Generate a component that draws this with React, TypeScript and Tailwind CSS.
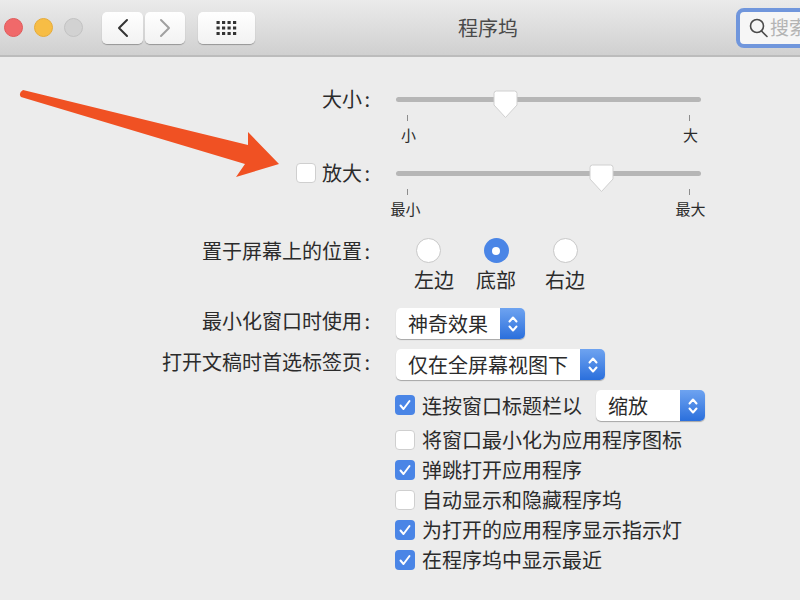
const textFont = "font-['Noto_Sans_CJK_SC','Liberation_Sans',sans-serif]";

function Chevrons() {
  return (
    <svg width="12" height="20" viewBox="0 0 12 20" fill="none" stroke="#fff" strokeWidth="2" strokeLinecap="round" strokeLinejoin="round">
      <polyline points="2.5,7.5 6,3.5 9.5,7.5" />
      <polyline points="2.5,12.5 6,16.5 9.5,12.5" />
    </svg>
  );
}

function Select({ label, width }: { label: string; width: string }) {
  return (
    <div className={`${width} h-[31px] flex rounded-[5px] bg-white shadow-[0_1px_1px_rgba(0,0,0,0.3)] overflow-hidden`}>
      <span className="flex-1 pl-[12px] text-[20px] leading-[31px] text-[#2b2b2b] whitespace-nowrap">{label}</span>
      <span className="w-[25px] flex items-center justify-center bg-gradient-to-b from-[#6ea3f0] to-[#2a6fdc]">
        <Chevrons />
      </span>
    </div>
  );
}

function Checkbox({ checked }: { checked?: boolean }) {
  if (checked) {
    return (
      <span className="w-[20px] h-[20px] shrink-0 rounded-[4px] bg-[#4a85e6] flex items-center justify-center">
        <svg width="14" height="14" viewBox="0 0 14 14" fill="none" stroke="#fff" strokeWidth="2" strokeLinecap="round" strokeLinejoin="round">
          <polyline points="2.5,7.5 5.5,11 11.5,3" />
        </svg>
      </span>
    );
  }
  return <span className="w-[20px] h-[20px] shrink-0 rounded-[4px] bg-white border border-[#cfcfcf]" />;
}

function CheckRow({ label, checked }: { label: string; checked?: boolean }) {
  return (
    <div className="h-[30px] flex items-center gap-[7px] text-[20px] text-[#2b2b2b] whitespace-nowrap">
      <Checkbox checked={checked} />
      <span>{label}</span>
    </div>
  );
}

function Radio({ checked }: { checked?: boolean }) {
  if (checked) {
    return (
      <span className="w-[25px] h-[25px] rounded-full bg-[#4a85e6] flex items-center justify-center">
        <span className="w-[8px] h-[8px] rounded-full bg-white" />
      </span>
    );
  }
  return <span className="w-[25px] h-[25px] rounded-full bg-white border border-[#c8c8c8]" />;
}

function Thumb({ className }: { className: string }) {
  return (
    <svg className={`absolute ${className}`} width="25" height="29" viewBox="0 0 25 29">
      <path d="M3.5 1 H21.5 Q24 1 24 3.5 V15 L12.5 27.5 L1 15 V3.5 Q1 1 3.5 1 Z" fill="#fff" stroke="#d0d0d0" strokeWidth="1" />
    </svg>
  );
}

function Tick({ label, labelClass }: { label: string; labelClass?: string }) {
  return (
    <div className="w-px flex flex-col items-center">
      <span className="w-px h-[6px] bg-[#8c8c8c]" />
      <span className={`mt-[3px] text-[15px] leading-[22px] text-[#2b2b2b] whitespace-nowrap ${labelClass ?? ""}`}>{label}</span>
    </div>
  );
}

function Slider({ thumb, min, max, minClass }: { thumb: string; min: string; max: string; minClass?: string }) {
  return (
    <div className="w-[305px]">
      <div className="h-[26px] flex items-center relative">
        <div className="w-full h-[5px] rounded-full bg-[#b6b6b6]" />
        <Thumb className={thumb} />
      </div>
      <div className="mt-[3px] px-[11px] flex justify-between">
        <Tick label={min} labelClass={minClass} />
        <Tick label={max} labelClass="ml-[2px]" />
      </div>
    </div>
  );
}

function Row({ label, className, children }: { label: React.ReactNode; className: string; children: React.ReactNode }) {
  return (
    <div className={`flex ${className}`}>
      <div className="w-[370px] shrink-0 flex justify-end items-center h-[26px] text-[20px] text-[#2b2b2b] whitespace-nowrap">
        {label}
        <span className="w-[8px] text-right">:</span>
      </div>
      <div className="ml-[26px]">{children}</div>
    </div>
  );
}

function Toolbar() {
  return (
    <header className="h-[57px] flex items-center pl-[4px] bg-gradient-to-b from-[#ebebeb] to-[#d0d0d0] border-b-2 border-[#bcbcbc]">
      <div className="shrink-0 flex gap-[11px]">
        <span className="w-[19px] h-[19px] rounded-full bg-[#f0696a] border border-[#e05a5a]" />
        <span className="w-[19px] h-[19px] rounded-full bg-[#f7bd45] border border-[#e6ab3a]" />
        <span className="w-[19px] h-[19px] rounded-full bg-[#d2d2d2] border border-[#c2c2c2]" />
      </div>
      <div className="ml-[19px] shrink-0 flex gap-[2px]">
        <button className="w-[41px] h-[32px] rounded-[5px] bg-gradient-to-b from-white to-[#f2f2f2] shadow-[0_1px_1px_rgba(0,0,0,0.3)] flex items-center justify-center">
          <svg width="14" height="20" viewBox="0 0 14 20" fill="none" stroke="#333" strokeWidth="2" strokeLinecap="round" strokeLinejoin="round">
            <polyline points="11,2 3,10 11,18" />
          </svg>
        </button>
        <button className="w-[40px] h-[32px] rounded-[5px] bg-gradient-to-b from-white to-[#f2f2f2] shadow-[0_1px_1px_rgba(0,0,0,0.3)] flex items-center justify-center">
          <svg width="14" height="20" viewBox="0 0 14 20" fill="none" stroke="#a0a0a0" strokeWidth="2" strokeLinecap="round" strokeLinejoin="round">
            <polyline points="3,2 11,10 3,18" />
          </svg>
        </button>
      </div>
      <button className="ml-[13px] w-[57px] h-[32px] shrink-0 rounded-[5px] bg-gradient-to-b from-white to-[#f2f2f2] shadow-[0_1px_1px_rgba(0,0,0,0.3)] flex items-center justify-center">
        <svg width="24" height="18" viewBox="0 0 24 18" fill="#333">
          {[2, 7.5, 13].map((y) =>
            [1.5, 7, 12.5, 18].map((x) => <rect key={`${x}-${y}`} x={x} y={y} width="3.2" height="3" />),
          )}
        </svg>
      </button>
      <h1 className="w-[466px] shrink-0 text-center text-[20px] font-normal text-[#4a4a4a]">程序坞</h1>
      <div className="ml-[15px] w-[90px] h-[40px] shrink-0 flex items-center pl-[8px] gap-[2px] rounded-[8px] bg-[#f6f6f6] border-[4px] border-[#7096dc]">
        <svg width="20" height="22" viewBox="0 0 20 22" fill="none" stroke="#4a4a4a" strokeWidth="1.6" strokeLinecap="round" className="shrink-0">
          <circle cx="9" cy="9" r="6.5" />
          <line x1="13.5" y1="14" x2="19" y2="19.5" />
        </svg>
        <span className="text-[19px] text-[#b4b4b4] whitespace-nowrap">搜索</span>
      </div>
    </header>
  );
}

export default function App() {
  return (
    <div className={`relative w-[800px] h-[600px] overflow-hidden bg-[#ececec] ${textFont}`}>
      <Toolbar />
      <main className="pt-[29px]">
        <Row label="大小" className="h-[74px]">
          <Slider thumb="left-[97px] top-[4px]" min="小" max="大" minClass="ml-[2px]" />
        </Row>
        <Row
          label={
            <>
              <span className="w-[20px] h-[20px] mr-[6px] rounded-[4px] bg-white border border-[#cfcfcf]" />
              <span>放大</span>
            </>
          }
          className="h-[78px]"
        >
          <Slider thumb="left-[193px] top-[4px]" min="最小" max="最大" minClass="mr-[4px]" />
        </Row>
        <Row label="置于屏幕上的位置" className="h-[70px]">
          <div className="flex text-[20px] text-[#2b2b2b]">
            <div className="w-[64px] flex flex-col items-center">
              <Radio />
              <span className="mt-[2px] ml-[12px]">左边</span>
            </div>
            <div className="w-[72px] flex flex-col items-center">
              <Radio checked />
              <span className="mt-[2px]">底部</span>
            </div>
            <div className="w-[66px] flex flex-col items-center">
              <Radio />
              <span className="mt-[2px]">右边</span>
            </div>
          </div>
        </Row>
        <Row label="最小化窗口时使用" className="h-[41px]">
          <Select label="神奇效果" width="w-[129px]" />
        </Row>
        <Row label="打开文稿时首选标签页" className="h-[41px]">
          <Select label="仅在全屏幕视图下" width="w-[209px]" />
        </Row>
        <div className="ml-[395px]">
          <div className="h-[35px] flex items-start gap-[7px] text-[20px] text-[#2b2b2b] whitespace-nowrap">
            <span className="mt-[5px]">
              <Checkbox checked />
            </span>
            <span className="leading-[31px]">连按窗口标题栏以</span>
            <span className="ml-[7px]">
              <Select label="缩放" width="w-[109px]" />
            </span>
          </div>
          <CheckRow label="将窗口最小化为应用程序图标" />
          <CheckRow label="弹跳打开应用程序" checked />
          <CheckRow label="自动显示和隐藏程序坞" />
          <CheckRow label="为打开的应用程序显示指示灯" checked />
          <CheckRow label="在程序坞中显示最近" checked />
        </div>
      </main>
      <svg className="absolute left-0 top-0 pointer-events-none" width="300" height="190" viewBox="0 0 300 190">
        <path d="M23 90 L248 145 L248 132 L279 164 L236 177 L245 164 L21 97 Q18 93 23 90 Z" fill="#f05123" />
      </svg>
    </div>
  );
}
